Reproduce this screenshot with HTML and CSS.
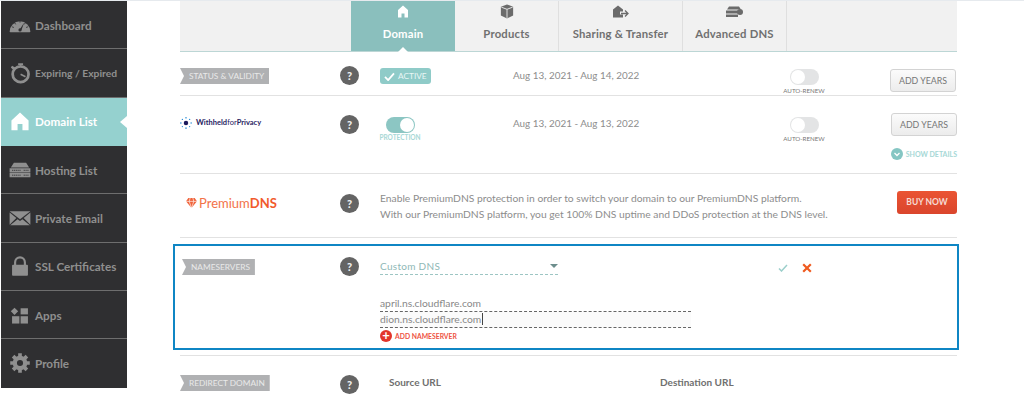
FILE: index.html
```html
<!DOCTYPE html>
<html lang="en">
<head>
<meta charset="utf-8">
<title>Domain</title>
<link rel="stylesheet" href="styles.css">
</head>
<body>
<div class="page">
  <nav class="side">
    <a class="nav"><svg class="ni" viewBox="0 0 36 24"><path d="M1 23a17 17 0 0 1 34 0l-1 1H2z" fill="#8f8f8f"/><path d="M17 20 25 8 20 21z" fill="#2f2f31"/><circle cx="18" cy="20" r="2.6" fill="#2f2f31"/><path d="M18 5v3M9 8l2 3M27 8l-2 3M5 15l3 1M31 15l-3 1" stroke="#2f2f31" stroke-width="1.4"/></svg><span>Dashboard</span></a>
    <a class="nav nav-sm"><svg class="ni" viewBox="0 0 36 34"><circle cx="19" cy="19" r="13" fill="none" stroke="#8f8f8f" stroke-width="4.5"/><path d="M15 1h8v3h-8zM5 5l5 3-3 4-4-4z" fill="#8f8f8f"/><path d="M19 19l8 4" stroke="#8f8f8f" stroke-width="2.6"/></svg><span>Expiring / Expired</span></a>
    <a class="nav on"><svg class="ni" viewBox="0 0 36 30"><path d="M18 1 32 14v16H22V20h-8v10H4V14z" fill="#fff"/></svg><span>Domain List</span></a>
    <a class="nav"><svg class="ni" viewBox="0 0 36 26"><path d="M8 1h20l5 8H3z" fill="#8f8f8f"/><path d="M1 10h34v7H1zM1 18h34v7H1z" fill="#8f8f8f"/><path d="M5 13.500h14M5 21.500h14M24 13.500h8M24 21.500h8" stroke="#2f2f31" stroke-width="1.400" stroke-dasharray="2 1"/></svg><span>Hosting List</span></a>
    <a class="nav"><svg class="ni" viewBox="0 0 36 26"><path d="M1 2h34L18 15z" fill="#8f8f8f"/><path d="M1 4v20l11-11zM35 4v20L24 13zM2 25l12-10 4 3 4-3 12 10z" fill="#8f8f8f"/></svg><span>Private Email</span></a>
    <a class="nav"><svg class="ni" viewBox="0 0 36 32"><path d="M10 15V10a8 8 0 0 1 16 0v5" fill="none" stroke="#8f8f8f" stroke-width="3.500"/><rect x="5" y="14" width="26" height="18" rx="1.500" fill="#8f8f8f"/></svg><span>SSL Certificates</span></a>
    <a class="nav"><svg class="ni" viewBox="0 0 36 30"><path d="M9 3l6 6-6 6-6-6z" fill="#8f8f8f"/><rect x="19" y="4" width="12" height="10" fill="#8f8f8f"/><rect x="5" y="17" width="12" height="12" fill="#8f8f8f"/><rect x="19" y="17" width="12" height="12" fill="#8f8f8f"/></svg><span>Apps</span></a>
    <a class="nav"><svg class="ni" viewBox="0 0 36 34"><circle cx="18" cy="17" r="8.500" fill="none" stroke="#8f8f8f" stroke-width="7"/><path d="M18 1v32M2 17h32M6.700 5.700l22.600 22.600M29.300 5.700 6.700 28.300" stroke="#8f8f8f" stroke-width="6"/><circle cx="18" cy="17" r="5" fill="#2f2f31"/></svg><span>Profile</span></a>
  </nav>

  <main class="main">
    <div class="tabs">
      <a class="tab on"><svg class="ti" viewBox="0 0 14 14"><path d="M7 1l5 4.500V13H8.500V9h-3v4H2V5.500z" fill="#fff"/></svg><span>Domain</span></a>
      <a class="tab"><svg class="ti" viewBox="0 0 16 16"><path d="M8 0l7 2.500v10L8 16l-7-3.500v-10z" fill="#6b6b6b"/><path d="M1.500 3 8 5.500 14.500 3M8 5.500V16" stroke="#f1f1f1" stroke-width="1" fill="none"/></svg><span>Products</span></a>
      <a class="tab wide"><svg class="ti ti-w" viewBox="0 0 18 14"><path d="M6 1l5 4v2H8v3h3v3H1V5z" fill="#6b6b6b"/><path d="M9 9h7M13 6l3 3-3 3" stroke="#6b6b6b" stroke-width="1.300" fill="none"/></svg><span>Sharing &amp; Transfer</span></a>
      <a class="tab wide"><svg class="ti ti-w" viewBox="0 0 18 14"><path d="M3 2h10l2 3H1zM0 6h12v3H0zM0 10h12v2.500H0z" fill="#6b6b6b"/><circle cx="14" cy="7.500" r="3" fill="#6b6b6b"/></svg><span>Advanced DNS</span></a>
    </div>

    <section class="row r-status">
      <div class="cell-label"><span class="tag">STATUS &amp; VALIDITY</span></div>
      <div class="cell-help"><span class="help">?</span></div>
      <div class="cell-state"><span class="badge"><svg class="bc" viewBox="0 0 12 10"><path d="M1 5.500 4.500 9 11 1.500" stroke="#fff" stroke-width="2" fill="none"/></svg>ACTIVE</span></div>
      <div class="cell-date">Aug 13, 2021 - Aug 14, 2022</div>
      <div class="cell-auto"><span class="toggle"></span><small>AUTO-RENEW</small></div>
      <div class="cell-btn"><a class="btn">ADD YEARS</a></div>
    </section>

    <section class="row r-privacy">
      <div class="cell-label"><span class="wfp"><svg class="wfp-i" viewBox="0 0 14 14"><circle cx="7" cy="7" r="2.600" fill="#1d1a5c"/><g fill="#2d8fd8"><circle cx="7" cy="1" r=".9"/><circle cx="7" cy="13" r=".9"/><circle cx="1" cy="7" r=".9"/><circle cx="13" cy="7" r=".9"/><circle cx="2.800" cy="2.800" r=".8"/><circle cx="11.200" cy="2.800" r=".8"/><circle cx="2.800" cy="11.200" r=".8"/><circle cx="11.200" cy="11.200" r=".8"/></g></svg><b>Withheld</b><i>for</i><b>Privacy</b></span></div>
      <div class="cell-help"><span class="help">?</span></div>
      <div class="cell-state"><div class="prot"><span class="toggle t-on"></span><small>PROTECTION</small></div></div>
      <div class="cell-date">Aug 13, 2021 - Aug 13, 2022</div>
      <div class="cell-auto"><span class="toggle"></span><small>AUTO-RENEW</small></div>
      <div class="cell-btn"><a class="btn">ADD YEARS</a><a class="details"><span class="dot"><svg viewBox="0 0 8 8"><path d="M1.500 3 4 5.500 6.500 3" stroke="#fff" stroke-width="1.300" fill="none"/></svg></span>SHOW DETAILS</a></div>
    </section>

    <section class="row r-premium">
      <div class="cell-label"><span class="pdns"><svg class="pdns-i" viewBox="0 0 12 11"><path d="M2.500 0h7L12 3.500 6 11 0 3.500z" fill="#f0633a"/><path d="M0 3.700h12M3.500 3.700 6 11l2.500-7.300M3.500 3.700 4.500 0M8.500 3.700 7.500 0" stroke="#fff" stroke-width=".7" fill="none"/></svg>Premium<b>DNS</b></span></div>
      <div class="cell-help"><span class="help">?</span></div>
      <p class="desc">Enable PremiumDNS protection in order to switch your domain to our PremiumDNS platform.<br>With our PremiumDNS platform, you get 100% DNS uptime and DDoS protection at the DNS level.</p>
      <div class="cell-btn"><a class="btn btn-buy">BUY NOW</a></div>
    </section>

    <section class="row r-ns">
      <div class="cell-label"><span class="tag">NAMESERVERS</span></div>
      <div class="cell-help"><span class="help">?</span></div>
      <div class="ns-form">
        <div class="select"><span>Custom DNS</span><i class="caret"></i></div>
        <div class="ns-input">april.ns.cloudflare.com</div>
        <div class="ns-input focus">dion.ns.cloudflare.com<i class="cursor"></i></div>
        <a class="add"><span class="plus">+</span>ADD NAMESERVER</a>
      </div>
      <div class="ns-actions">
        <svg class="ok" viewBox="0 0 10 8"><path d="M1 4.500 3.500 7 9 1" stroke="#9ccfcb" stroke-width="1.500" fill="none"/></svg>
        <svg class="no" viewBox="0 0 10 10"><path d="M1.200 1.200l7.600 7.600M8.800 1.200 1.200 8.800" stroke="#ef5a1f" stroke-width="2.200"/></svg>
      </div>
    </section>

    <section class="row r-redirect">
      <div class="cell-label"><span class="tag">REDIRECT DOMAIN</span></div>
      <div class="cell-help"><span class="help">?</span></div>
      <div class="th-src">Source URL</div>
      <div class="th-dst">Destination URL</div>
    </section>
  </main>
</div>
</body>
</html>
```
FILE: styles.css
```css
* { box-sizing: border-box; }
html, body { margin: 0; height: 401px; overflow: hidden; background: #fff; }
body { font-family: Lato, "Open Sans", sans-serif; color: #8b8b8b; }
small, i { font-style: normal; }

.page { display: flex; align-items: flex-start; border-top: 1px solid #e6eaee; }

/* sidebar */
.side { width: 126px; margin-left: 1px; flex: none; background: #2f2f31; display: flex; flex-direction: column; height: 387px; }
.nav { height: 48.330px; display: flex; align-items: center; gap: 4px; padding: 0 0 0 8px; border-bottom: 1px solid #6e6e6e; color: #8f8f8f; font-size: 11.700px; font-weight: 700; white-space: nowrap; position: relative; }
.nav:last-child { border-bottom: 0; }
.nav-sm { font-size: 10.300px; }
.ni { width: 22px; height: 22px; flex: none; }
.nav.on { background: #95d1cf; color: #fff; border-bottom-color: #95d1cf; }
.nav.on::after { content: ""; position: absolute; right: 0; top: 18px; border: 6px solid transparent; border-left: 0; border-right: 7px solid #fff; }

/* main */
.main { margin-left: 53px; width: 777px; }
.tabs { display: flex; height: 51px; padding-left: 171px; background: #f1f1f1; border-bottom: 1px solid #bcd6d5; }
.tab { width: 104px; display: flex; flex-direction: column; align-items: center; border-right: 1px solid #dfdfdf; color: #707070; font-size: 11.300px; font-weight: 700; letter-spacing: .2px; padding-top: 3px; gap: 8px; position: relative; }
.tab.wide { width: 124px; }
.tab.wide:last-child { width: 104px; }
.tab.on { background: #8abfbd; color: #fff; border-right: 0; }
.tab.on::after { content: ""; position: absolute; bottom: -1px; left: 47px; border: 5px solid transparent; border-top: 0; border-bottom: 5px solid #fff; }
.ti { width: 14px; height: 15px; }
.ti-w { width: 18px; }

/* rows */
.row { display: grid; grid-template-columns: 160px 40px 133px 270px 70px 104px; border-bottom: 1px solid #e2e2e2; font-size: 11px; position: relative; }
.r-status { height: 44px; padding-top: 8px; }
.r-status .cell-label { padding-top: 8px; }
.r-privacy { height: 78px; padding-top: 7px; }
.r-privacy .cell-label { padding-top: 14px; }
.r-premium { height: 64px; padding-top: 19px; grid-template-columns: 160px 40px 504px 73px; }
.r-ns { height: 106px; margin: 6px -2px 5px -7px; padding: 13px 0 0 7px; border: 2px solid #0f86c4; grid-template-columns: 158px 40px 377px 60px; }
.r-redirect { height: 46px; padding-top: 19px; border-top: 1px solid #e2e2e2; border-bottom: 0; grid-template-columns: 160px 40px 280px 200px; }

.tag { display: inline-block; height: 16px; line-height: 16px; padding: 0 5px 0 9px; background: #b0b1b3; color: #e9e9e9; font-size: 8.300px; clip-path: polygon(0 0, 100% 0, 100% 100%, 0 100%, 4px 50%); }

.help { display: block; width: 19px; height: 19px; border-radius: 50%; background: #646464; color: #eee; font-size: 11px; font-weight: 900; line-height: 19px; text-align: center; }
.cell-help { padding-top: 6px; }
.r-privacy .cell-help { padding-top: 12px; }
.r-premium .cell-help { padding-top: 1px; }
.r-ns .cell-help { margin-top: -2px; padding-top: 0; }
.r-redirect .cell-help { padding-top: 0; }

.badge { display: inline-flex; align-items: center; gap: 3px; height: 16px; margin-top: 8px; padding: 0 4px; background: #8fcbc8; border-radius: 3px; color: #e9f6f5; font-size: 8.300px; }
.bc { width: 11px; height: 9px; }

.cell-date { padding-top: 9px; font-size: 9.900px; color: #8d8d8d; }
.r-privacy .cell-date { padding-top: 14px; }

.cell-auto { display: flex; flex-direction: column; align-items: center; width: 42px; padding-top: 9px; }
.r-privacy .cell-auto { padding-top: 14px; }
.cell-auto small { font-size: 6.200px; color: #777; margin-top: 2px; white-space: nowrap; }
.toggle { display: block; width: 29px; height: 16px; border-radius: 8px; background: #e3e4e5; position: relative; flex: none; }
.toggle::after { content: ""; position: absolute; left: 1px; top: 1px; width: 14px; height: 14px; border-radius: 50%; background: #fff; }
.t-on { background: #8cc6c3; }
.t-on::after { left: 14px; }

.prot { display: flex; flex-direction: column; align-items: center; width: 40px; padding-top: 14px; }
.prot small { font-size: 6.500px; font-weight: 700; color: #a7d8d6; margin-top: 1px; white-space: nowrap; }

.cell-btn { display: flex; flex-direction: column; align-items: flex-end; }
.btn { display: block; width: 66px; height: 23px; line-height: 21px; text-align: center; border: 1px solid #d3d3d3; border-radius: 3px; background: linear-gradient(#fbfbfb, #ececec); color: #767676; font-size: 8.800px; }
.r-status .cell-btn { padding-top: 9px; margin-right: 1px; }
.r-privacy .cell-btn { padding-top: 10px; }
.btn-buy { width: 60px; height: 23px; background: linear-gradient(#ea5433, #da452c); border: 0; color: #f6dbd4; font-size: 8.500px; font-weight: 700; line-height: 23px; }
.r-premium .cell-btn { margin-top: -2px; }
.details { display: flex; align-items: center; gap: 3px; margin-top: 12px; font-size: 7px; font-weight: 700; color: #a6d8d6; white-space: nowrap; }
.dot { width: 12px; height: 12px; border-radius: 50%; background: #85c6c3; display: flex; align-items: center; justify-content: center; }
.dot svg { width: 8px; height: 8px; }

.wfp { display: flex; align-items: center; font-size: 7.500px; color: #27225f; line-height: 1; }
.wfp-i { width: 12px; height: 12px; margin-right: 4px; }
.wfp i { font-weight: 400; }
.pdns { display: flex; align-items: center; padding: 2px 0 0 6px; color: #f37248; font-size: 13px; }
.pdns b { color: #f15a2c; }
.pdns-i { width: 11px; height: 10px; margin-right: 2px; }

.desc { margin: -2px 0 0; font-size: 10.300px; line-height: 15.500px; color: #8d8d8d; }

.ns-form { width: 311px; }
.select { width: 178px; height: 16px; display: flex; justify-content: space-between; align-items: center; padding-bottom: 2px; border-bottom: 1px dashed #9cc5c3; color: #8fb8b6; font-size: 10px; letter-spacing: .3px; }
.caret { border: 4px solid transparent; border-bottom: 0; border-top: 4px solid #6d8e8d; }
.ns-input { height: 16px; line-height: 15px; border-bottom: 1px dashed #666; color: #888; font-size: 10.300px; }
.select + .ns-input { margin-top: 21px; }
.focus { background: #fbfbfb; }
.cursor { display: inline-block; width: 1px; height: 12px; background: #444; margin-left: 1px; vertical-align: -2px; }
.add { display: flex; align-items: center; gap: 3px; margin-top: 2px; color: #ee5141; font-size: 6.800px; font-weight: 700; }
.plus { width: 12px; height: 12px; border-radius: 50%; background: #e2352b; color: #fff; font-size: 13px; font-weight: 700; line-height: 11px; text-align: center; }

.ns-actions { display: flex; align-items: center; height: 12px; gap: 14px; margin: 3px 0 0 21px; }
.ok { width: 10px; height: 8px; flex: none; }
.no { width: 10px; height: 10px; flex: none; }

.th-src, .th-dst { color: #6f6f6f; font-size: 10px; font-weight: 700; padding-top: 1px; }
.th-src { padding-left: 9px; }
```
